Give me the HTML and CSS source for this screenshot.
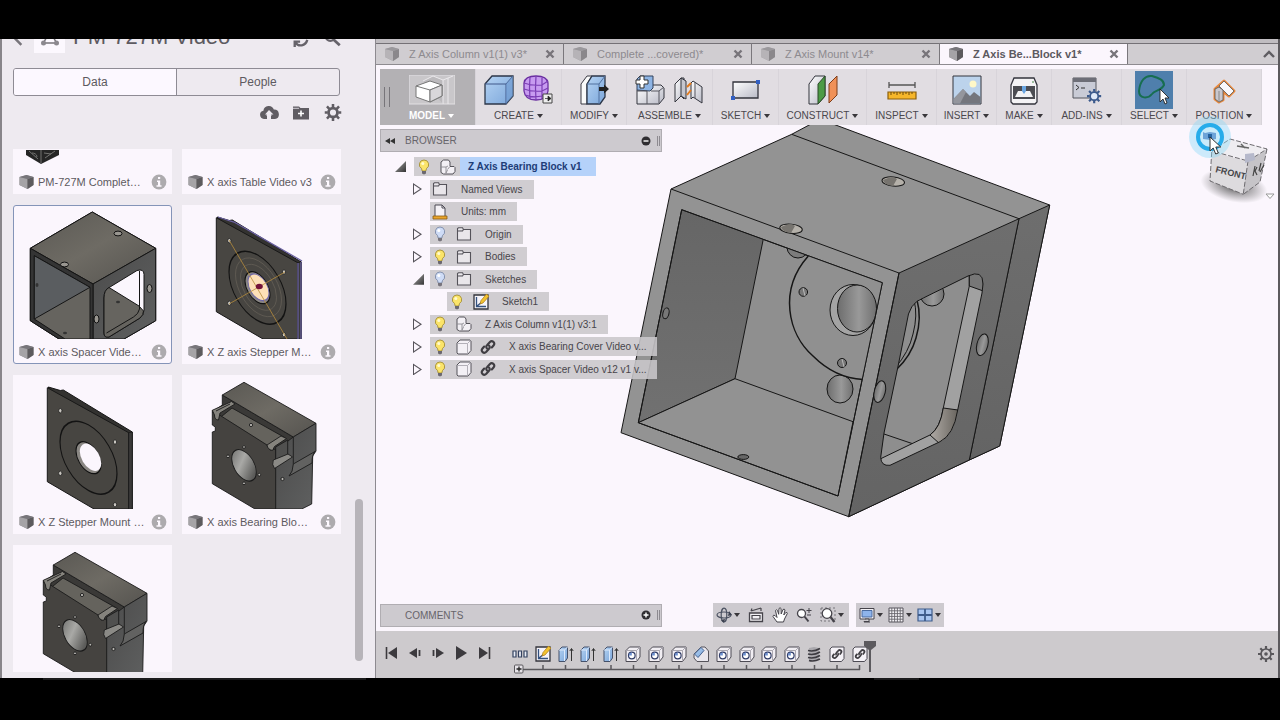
FILE: index.html
```html
<!DOCTYPE html>
<html lang="en">
<head>
<meta charset="utf-8">
<title>Z Axis Bearing Block v1</title>
<link rel="stylesheet" href="styles.css">
</head>
<body>
<svg class="sprite" aria-hidden="true">
  <defs>
    <linearGradient id="gBlue" x1="0" y1="0" x2="1" y2="1"><stop offset="0" stop-color="#b5d3f3"/><stop offset="1" stop-color="#7ba6da"/></linearGradient>
    <linearGradient id="gWhite" x1="0" y1="0" x2="1" y2="1"><stop offset="0" stop-color="#fff"/><stop offset="1" stop-color="#b9bac6"/></linearGradient>
    <linearGradient id="gTop" x1="0" y1="0" x2="1" y2="1"><stop offset="0" stop-color="#5a5853"/><stop offset=".5" stop-color="#6e6b64"/><stop offset="1" stop-color="#55534f"/></linearGradient>
    <linearGradient id="gSide" x1="0" y1="0" x2="1" y2="1"><stop offset="0" stop-color="#4b4b4b"/><stop offset="1" stop-color="#5f6060"/></linearGradient>
    <linearGradient id="gBore" x1="0" y1="0" x2="1" y2=".4"><stop offset="0" stop-color="#6c6c6a"/><stop offset=".5" stop-color="#a9a9a6"/><stop offset="1" stop-color="#5c5c5a"/></linearGradient>
    <linearGradient id="gHole" x1="0" y1="0" x2="1" y2="0"><stop offset="0" stop-color="#6d6d6d"/><stop offset=".55" stop-color="#999"/><stop offset="1" stop-color="#707070"/></linearGradient>
  </defs>
  <symbol id="part" viewBox="0 0 16 16"><path d="M1 3 8 1l7 2v8l-6 4-8-4z" fill="#8b898c"/><path d="M1 3l8 2v10l-8-4z" fill="#a5a3a6"/><path d="M9 5l6-2v8l-6 4z" fill="#5c5a5d"/><path d="M1 3 8 1l7 2-6 2z" fill="#77757a"/></symbol>
  <symbol id="info" viewBox="0 0 16 16"><circle cx="8" cy="8" r="7.400" fill="#adabae"/><path d="M7 3h2.200v2H7zM6 6.500h3.200v4.800h1.300v1.400H5.500v-1.400H7V7.900H6z" fill="#fdf9ff"/></symbol>
  <symbol id="x" viewBox="0 0 10 10"><path d="M1.500 1.500l7 7m0-7l-7 7" stroke="currentColor" stroke-width="2.400"/></symbol>
  <symbol id="bulbOn" viewBox="0 0 16 16"><path d="M8 1a4.600 4.600 0 0 0-2.500 8.500L6.200 12h3.600l.7-2.500A4.600 4.600 0 0 0 8 1z" fill="#fbe46a" stroke="#a38d35" stroke-width=".9"/><circle cx="6.800" cy="4.500" r="1.500" fill="#fffbd0"/><path d="M6 12h4v2.500L8 15.600 6 14.500z" fill="#6b6870"/></symbol>
  <symbol id="bulbOff" viewBox="0 0 16 16"><path d="M8 1a4.600 4.600 0 0 0-2.500 8.500L6.200 12h3.600l.7-2.500A4.600 4.600 0 0 0 8 1z" fill="#cfdcf6" stroke="#7c89a6" stroke-width=".9"/><circle cx="6.800" cy="4.500" r="1.500" fill="#fff"/><path d="M6 12h4v2.500L8 15.600 6 14.500z" fill="#77747c"/></symbol>
  <symbol id="folder" viewBox="0 0 16 16"><path d="M1.500 3.500v-1l1-.8h4l1 1.800h7v10.500h-13zM1.500 5h5l1-1.500" fill="#e9e6ea" stroke="#55535a" stroke-width="1.100"/></symbol>
  <symbol id="comp" viewBox="0 0 16 16"><path d="M1 3l2.500-2h5L10 3v4.500h4l1 1v4L13 15H3.500L1 13.500z" fill="#f3f0f5" stroke="#55535a"/><path d="M1 8h5l2-1M6 8v6.500M7.500 10.500 9.500 8M6 14l1.500-3" fill="none" stroke="#8d8b92" stroke-width=".9"/></symbol>
  <symbol id="body" viewBox="0 0 16 16"><path d="M1 4l3-3h10l1 1v9.500l-3 3.500H2l-1-1z" fill="#f3f0f5" stroke="#55535a"/><path d="M1.500 4.500h10v10M11.500 4.500l3-3" fill="none" stroke="#b3b0b8"/></symbol>
  <symbol id="link" viewBox="0 0 16 16"><g fill="none" stroke="#3f3d42" stroke-width="2.100" stroke-linecap="round"><path d="M7 9.500C5.800 8.200 6.200 7 7.200 6l2.500-2.800c2.500-2.500 6 .6 3.800 3.300L11.800 8.500"/><path d="M9 6.500c1.200 1.300.8 2.500-.2 3.500l-2.500 2.800c-2.500 2.500-6-.6-3.800-3.300L4.200 7.500"/></g></symbol>
  <symbol id="sketch" viewBox="0 0 16 16"><path d="M1 1h14v14H1z" fill="#f6f4fa" stroke="#34343c" stroke-width="1.300"/><path d="M3.500 3v9.500H13M4 12l5-4" stroke="#33517f" fill="none" stroke-width="1.300"/><path d="M7 10l1-3.500L13.500 0 16 2.200 10 9z" fill="#f2c230" stroke="#a97817" stroke-width=".7"/></symbol>
  <symbol id="extrude" viewBox="0 0 16 16"><path d="M1 4l3-3h5.500v11L7 15.500H1z" fill="url(#gBlue)" stroke="#45516a"/><path d="M1 4h5.500v11M6.500 4l3-3" fill="none" stroke="#dce9fb"/><path d="M13.500 15V3M11.800 5l1.700-2.500L15.200 5" stroke="#333" fill="none"/></symbol>
  <symbol id="hole" viewBox="0 0 16 16"><path d="M1 4.500 4.500 1H15v10l-3.500 4.500H1z" fill="#f1eef3" stroke="#4d4b54"/><path d="M1.500 4.500h10v10M11.500 4.500 15 1" fill="none" stroke="#aaa7b0"/><circle cx="6.800" cy="9.500" r="3.300" fill="#fff" stroke="#2f3b66" stroke-width="1.200"/><path d="M6.800 9.500V6.500a3 3 0 0 0-3 3z" fill="#6c8fd0"/></symbol>
  <symbol id="chamfer" viewBox="0 0 16 16"><path d="M1 8l7-7h4l3.500 4v10.500H4L1 12z" fill="#e9e7ed" stroke="#55535a"/><path d="M1.500 8 8 1.500 11 4.500 5 11.500z" fill="url(#gBlue)" stroke="#476391"/></symbol>
  <symbol id="thread" viewBox="0 0 16 16"><path d="M3 2l5-1 5 1v12l-5 1.500L3 14z" fill="#aaa8ad"/><path d="M2 4.500Q8 6 14 2.500M2 8Q8 9.500 14 6M2 11.500Q8 13 14 9.500M3 14.500Q8 16 14 13" stroke="#3c3a40" stroke-width="1.600" fill="none"/></symbol>
  <symbol id="joint" viewBox="0 0 16 16"><path d="M1 3l2-2h12v11.500L12.500 15.500H1z" fill="#f5f2f7" stroke="#4d4b54"/><g transform="translate(2.500 2.500) scale(.7)" fill="none" stroke="#3f3d42" stroke-width="2.500"><path d="M7 9.500C5.800 8.200 6.200 7 7.200 6l2.500-2.800c2.500-2.500 6 .6 3.800 3.300L11.800 8.500M9 6.500c1.200 1.300.8 2.500-.2 3.500l-2.500 2.800c-2.500 2.500-6-.6-3.800-3.300L4.200 7.500"/></g></symbol>
  <symbol id="gear" viewBox="0 0 16 16"><circle cx="8" cy="8" r="4.200" fill="none" stroke="currentColor" stroke-width="2.600"/><path d="M8 0v3M8 13v3M0 8h3M13 8h3M2.300 2.300l2.200 2.200M11.500 11.500l2.200 2.200M2.300 13.700l2.200-2.200M11.500 4.500l2.200-2.200" stroke="currentColor" stroke-width="2.400"/></symbol>
  <g id="plateShape">
    <path d="M48.300 386l12 3.500 3-.5 69 42v77H94z" fill="#333230" stroke="#151515"/>
    <path d="M47.300 386.700l81.400 45V508H94l-46.700-27.300z" fill="#484642" stroke="#181818"/>
    <path d="M128.700 431.700l3.600-.7v77h-3.600z" fill="#3b3a3a" stroke="#181818" stroke-width=".7"/>
    <g transform="matrix(1 .557 0 1.15 88.500 456.700)">
      <circle r="28.500" fill="#474541" stroke="#131313" stroke-width="1.200"/>
      <circle r="12.500" fill="#8a8783" stroke="#111"/>
    </g>
    <g fill="#c9c6c0" stroke="#1c1c1c" stroke-width=".8"><ellipse cx="60.300" cy="409.700" rx="1.700" ry="2.200"/><ellipse cx="115" cy="441" rx="1.700" ry="2.200"/><ellipse cx="60.300" cy="472.300" rx="1.700" ry="2.200"/><ellipse cx="115" cy="503.700" rx="1.700" ry="2.200"/></g>
  </g>
  <g id="blockShape" stroke="#1b1b1b" stroke-width=".9" stroke-linejoin="round">
    <path d="M222.300 394l71 42v27l-17 14-64-66 10-7z" fill="#3a3937"/>
    <path d="M222.300 394L244 381.300l72 41-22.700 13.700z" fill="url(#gTop)"/>
    <path d="M288 440l5.300-4 22.700-13.700V450l-3.300 5-1 48-10 5H275v-58z" fill="url(#gSide)"/>
    <path d="M293.300 436v27" fill="none"/>
    <path d="M289 475q4-4 4.300-12L315 450.500q-3 3-3 11.500z" fill="#626261"/>
    <path d="M220 416.700L232 407l53 29.700-17 9.300z" fill="#65635d"/>
    <path d="M212.300 409.300l7.700 5L267 444l3 5 5.700-1V508H255l-42.700-25.300V431l3-1v-4l-3-2z" fill="#454340"/>
    <path d="M212.300 409.300l19.200-8.800 3.500 2.500-15 9-1.500 7q-4 0-4-5z" fill="#85837d"/><path d="M216 410l14-7" fill="none"/>
    <path d="M267 444l14-9 5.500 2.500-12 8-2 4q-5-1-5.500-5.500z" fill="#85837d"/>
    <path d="M275.700 446l12-7v16l-12 7z" fill="#50504f"/>
    <path d="M273.300 459l14.700-6 4.500 3-18 11.500q-3-4-1.200-8.500z" fill="#8b8a86"/>
    <g transform="matrix(1 .557 0 1.15 244 464.300)"><circle r="12.300" fill="url(#gBore)"/></g>
    <g fill="#bcbab5"><circle cx="244" cy="446" r="1.400"/><circle cx="228" cy="455.300" r="1.400"/><circle cx="259.300" cy="473.700" r="1.400"/><circle cx="244" cy="482.300" r="1.400"/><circle cx="282.500" cy="478" r="1.600"/><circle cx="251" cy="424" r="1.600"/></g>
  </g>
</svg>

<div class="letterbox top"></div>
<div class="app">
  <aside class="data-panel">
    <header class="project">
      <svg class="back" viewBox="0 0 12 24"><path d="M10 4 3 12l7 7" fill="none" stroke="#77747a" stroke-width="3"/></svg>
      <span class="project-icon"><svg viewBox="0 0 20 20"><path d="M10 3 3.500 15h13z" fill="none" stroke="#77747a" stroke-width="1.500"/><circle cx="3.500" cy="15" r="2.500" fill="#8c898f"/><circle cx="16.500" cy="15" r="2.500" fill="#8c898f"/></svg></span>
      <h1>PM-727M Video</h1>
      <svg class="head-icon" viewBox="0 0 20 20"><path d="M3 19v-6h6M4 14c3 5 11 4 13-3M17 2v6h-6" fill="none" stroke="#66636a" stroke-width="2.600"/></svg>
      <svg class="head-icon" viewBox="0 0 20 20"><circle cx="7" cy="7" r="5" fill="none" stroke="#66636a" stroke-width="2.500"/><path d="M10.500 10.500l7 6.500" stroke="#66636a" stroke-width="3"/></svg>
    </header>
    <div class="segmented"><button class="on">Data</button><button>People</button></div>
    <div class="panel-tools">
      <button aria-label="Upload"><svg viewBox="0 0 20 16"><path d="M5 14.500a4.200 4.200 0 0 1-.6-8.300A5.400 5.400 0 0 1 14.800 5a4.800 4.800 0 0 1 1.200 9.500h-4V10h2.500L10 5.500 6 10h2v4.500z" fill="#605d63"/><path d="M8.500 15.500V11H7l3-4 3 4h-1.500v4.500z" fill="#eeeaf1"/></svg></button>
      <button aria-label="New folder"><svg viewBox="0 0 20 16"><path d="M2 2h6l1.500 1.500H18V15H2z" fill="#605d63"/><path d="M2 3.800h6" stroke="#eeeaf1" stroke-width=".8"/><path d="M10 6v6M7 9h6" stroke="#fff" stroke-width="1.600"/></svg></button>
      <button aria-label="Settings"><svg viewBox="0 0 16 16"><use href="#gear"/></svg></button>
    </div>
    <div class="files">
      <ul class="cards">
        <li class="card"><svg class="thumb" viewBox="14 149 157 20" preserveAspectRatio="xMidYMin slice"><path d="M26 149h33v5l-18 9-15-9z" fill="#252525"/><path d="M41 149v13M29 150l9 8M55 150l-10 7M44 152l7 1M32 152c2 0 5 1 5 4" stroke="#7b7b78" fill="none" stroke-width=".9"/></svg><div class="name"><svg class="i16"><use href="#part"/></svg><span>PM-727M Complet…</span><svg class="i16"><use href="#info"/></svg></div></li>
        <li class="card"><svg class="thumb" viewBox="0 0 157 20"></svg><div class="name"><svg class="i16"><use href="#part"/></svg><span>X axis Table Video v3</span><svg class="i16"><use href="#info"/></svg></div></li>
        <li class="card selected"><svg class="thumb" viewBox="14 206 157 133" preserveAspectRatio="xMidYMin slice">
          <g stroke="#151515" stroke-linejoin="round">
            <path d="M30.300 248.300L92.300 212l63.400 36.300v72.400L124 339H59l-28.700-18.300z" fill="#4f4e4c"/>
            <path d="M30.300 248.300L92.300 212l63.400 36.300L93 284z" fill="url(#gTop)"/>
            <path d="M93 284l62.700-35.700v72.400L124 339H93z" fill="url(#gSide)"/>
            <path d="M30.300 248.300L93 284v55H59l-28.700-18.300z" fill="#343434"/>
            <path d="M34.300 255.700L90 287.300V339H65l-30.700-20z" fill="#66645f"/><path d="M34.300 255.700L90 287.300 34.300 319z" fill="#5a5d60"/>
            <path d="M104 298q0-8 6-11l27-16.500q7-2 7 4V310q0 5-4 8l-31 19q-5 1-5-4z" fill="#fbf6fd"/>
            <path d="M104 298q0-8 5-10.500L139 306l4.500 5q0 4-3.500 7l-31 19q-5 1-5-4z" fill="#66645f"/><path d="M139.500 271v38q-1 5-6 8l-27 16" fill="none"/>
          </g>
          <g fill="#999690" stroke="#111"><ellipse cx="118" cy="233.500" rx="4" ry="2.400"/><ellipse cx="64.500" cy="264.500" rx="4" ry="2.400"/><ellipse cx="149.500" cy="288.500" rx="2.500" ry="4"/><ellipse cx="96.500" cy="319" rx="2.500" ry="4"/></g><g fill="#333"><ellipse cx="37" cy="285" rx="1.500" ry="2"/><ellipse cx="118" cy="302" rx="2" ry="1.300"/><ellipse cx="65" cy="333" rx="2" ry="1.300"/></g>
        </svg><div class="name"><svg class="i16"><use href="#part"/></svg><span>X axis Spacer Vide…</span><svg class="i16"><use href="#info"/></svg></div></li>
        <li class="card"><svg class="thumb" viewBox="183 206 157 133" preserveAspectRatio="xMidYMin slice">
          <use href="#plateShape" x="169" y="-169"/>
          <path d="M298 263v77M301 262v78M218 217l12 4 4 1 68 39" stroke="#6a619f" fill="none" stroke-width="1.300"/>
          <g transform="matrix(1 .557 0 1.15 258.500 287.300)"><circle r="10.500" fill="#fde0b8" stroke="#6e67a8"/><g fill="none" stroke="#6d675d" stroke-width=".5"><circle r="18"/><circle r="23"/></g></g>
          <path d="M229 240l58 99M229 304l56-32" stroke="#b58b3c" stroke-width=".8"/><ellipse cx="259.300" cy="286.500" rx="3.500" ry="2.800" fill="#741339"/>
        </svg><div class="name"><svg class="i16"><use href="#part"/></svg><span>X Z axis Stepper M…</span><svg class="i16"><use href="#info"/></svg></div></li>
        <li class="card"><svg class="thumb" viewBox="14 375 157 133" preserveAspectRatio="xMidYMin slice"><use href="#plateShape"/><g transform="matrix(1 .557 0 1.15 90.500 456.300)"><circle r="10.700" fill="#fbf6fd"/></g></svg><div class="name"><svg class="i16"><use href="#part"/></svg><span>X Z Stepper Mount …</span><svg class="i16"><use href="#info"/></svg></div></li>
        <li class="card"><svg class="thumb" viewBox="183 375 157 133" preserveAspectRatio="xMidYMin slice"><use href="#blockShape"/></svg><div class="name"><svg class="i16"><use href="#part"/></svg><span>X axis Bearing Blo…</span><svg class="i16"><use href="#info"/></svg></div></li>
        <li class="card"><svg class="thumb" viewBox="183 375 157 133" preserveAspectRatio="xMidYMin slice"><use href="#blockShape"/></svg><div class="name"></div></li>
      </ul>
      <div class="scrollbar"></div>
    </div>
  </aside>

  <main class="workspace">
    <nav class="tabs">
      <div class="tab"><svg class="i16"><use href="#part"/></svg><button class="tab-name">Z Axis Column v1(1) v3*</button><button class="close" aria-label="Close"><svg><use href="#x"/></svg></button></div>
      <div class="tab"><svg class="i16"><use href="#part"/></svg><button class="tab-name">Complete ...covered)*</button><button class="close" aria-label="Close"><svg><use href="#x"/></svg></button></div>
      <div class="tab"><svg class="i16"><use href="#part"/></svg><button class="tab-name">Z Axis Mount v14*</button><button class="close" aria-label="Close"><svg><use href="#x"/></svg></button></div>
      <div class="tab active"><svg class="i16"><use href="#part"/></svg><button class="tab-name">Z Axis Be...Block v1*</button><button class="close" aria-label="Close"><svg><use href="#x"/></svg></button></div>
      <button class="collapse" aria-label="Collapse"><svg viewBox="0 0 12 8"><path d="M1 7l5-5 5 5" fill="none" stroke="#5f5d62" stroke-width="2.400"/></svg></button>
    </nav>

    <div class="toolbar">
      <button class="tool model"><span class="art"><svg width="46" height="30" viewBox="0 0 46 30"><path d="M0 0h46v29H0z" fill="#c9c7ca" stroke="#e2e0e3"/><path d="M14 6 24 1l10 4V29M34 5l10-4M39 3v26" fill="#bcbabd" stroke="#ebe9ec"/><path d="M7 11l14-5 12 4v11l-12 6-14-5z" fill="#fff" stroke="#777"/><path d="M7 11l14 4 12-5M21 15v12" fill="none" stroke="#777"/><path d="M21 15l12-5v11l-12 6z" fill="#d9d7da" stroke="#777"/></svg></span><span class="label">MODEL<i></i></span></button>
      <button class="tool"><span class="art wide"><svg width="30" height="30"><path d="M1 9l7-8h21v20l-7 8H1z" fill="url(#gBlue)" stroke="#2c3648" stroke-width="1.300"/><path d="M1 9h21v20M22 9l7-8" fill="none" stroke="#40598a"/><path d="M22 9l7-8v20l-7 8z" fill="#6c98ce" opacity=".6"/></svg><svg width="30" height="30"><path d="M1 8q1-7 12-7t12 7v8q-1 9-12 9T1 16z" fill="#c79bf0" stroke="#6a2fa0" stroke-width="1.300"/><path d="M1 8q8 3 18 2l6-4M1 14q8 3 18 2l6-3M2 20q8 3 17 1l5-2M7 2q-1 10 0 22M13 1q-1 12 0 24M19 3v21" fill="none" stroke="#7a3db4" stroke-width="1.200"/><path d="M20 19h9v9h-9z" fill="#eee" stroke="#444"/><path d="M22 23.500h3v-2.500l3 2.500-3 2.500v-2.500" fill="#222" stroke="#222" stroke-width=".7"/></svg></span><span class="label">CREATE<i></i></span></button>
      <button class="tool"><span class="art"><svg width="30" height="30"><path d="M2 9l6-8h5L8 9v20H2z" fill="#fafafa" stroke="#3a3a44"/><path d="M8 9l5-8h13v21l-5 7H8z" fill="url(#gBlue)" stroke="#2c3648" stroke-width="1.300"/><path d="M8 9h12v20M20 9l6-8" fill="none" stroke="#50709f"/><path d="M20 12h5V9.500l5 4.500-5 4.500V16h-5z" fill="#222"/></svg></span><span class="label">MODIFY<i></i></span></button>
      <button class="tool"><span class="art wide"><svg width="30" height="30"><path d="M2 15h10l5-5h9l3 3v10l-5 6H2z" fill="url(#gWhite)" stroke="#33343d"/><path d="M2 15V4l3-3h13v12l-3 3z" fill="#8db4e4" stroke="#33435c"/><path d="M12 16v13M2 16h10M16 16h8l5-4M24 16v12" fill="none" stroke="#56565f"/><path d="M5 1h4v4h4v4H9v4H5V9H1V5h4z" fill="#fff" stroke="#333"/></svg><svg width="30" height="30"><path d="M1 9l6-6h3v21l-3-3-6 6z" fill="url(#gWhite)" stroke="#33343d"/><path d="M7 3l5 3v18l-5-3z" fill="#c5c6ce" stroke="#33343d"/><path d="M17 8l2-2 9 6v16l-9-6-2 2z" fill="url(#gWhite)" stroke="#33343d"/><path d="M21 7v16" stroke="#55555c"/><path d="M13 12l4-4M13 20l4-5" stroke="#e27b1e" stroke-width="2"/></svg></span><span class="label">ASSEMBLE<i></i></span></button>
      <button class="tool"><span class="art"><svg width="30" height="30"><path d="M2 7h25v16H2z" fill="url(#gWhite)" stroke="#33343d" stroke-width="1.300"/><path d="M25 5h4v4h-4zM0 21h4v4H0z" fill="#3260c4"/></svg></span><span class="label">SKETCH<i></i></span></button>
      <button class="tool"><span class="art"><svg width="30" height="30"><path d="M1 9l6-8h10v20l-7 8H1z" fill="url(#gWhite)" stroke="#33343d"/><path d="M10 9l7-8v20l-7 8z" fill="#4c9b45" stroke="#2b4a28"/><path d="M21 9l8-8v19l-8 8z" fill="#f09158" stroke="#7e3d19"/></svg></span><span class="label">CONSTRUCT<i></i></span></button>
      <button class="tool"><span class="art"><svg width="30" height="30"><path d="M2 10h26M2 7v6M28 7v6" stroke="#555" stroke-width="1.300"/><path d="M1 17h28v7H1z" fill="#f6b62a" stroke="#8c5f0b" stroke-width="1.200"/><path d="M4 17v3M7 17v2M10 17v3M13 17v2M16 17v3M19 17v2M22 17v3M25 17v2" stroke="#6c4a0a"/></svg></span><span class="label">INSPECT<i></i></span></button>
      <button class="tool"><span class="art"><svg width="30" height="30"><path d="M1 1h28v28H1z" fill="#bcd3ec" stroke="#33343d"/><path d="M1.500 24L11 14l7 7 4-4 6.500 5v6.500h-27z" fill="#74767d"/><path d="M1.500 24L11 14l3 3-6 11.500H1.500z" fill="#94969d"/><circle cx="21" cy="9" r="3.500" fill="#fff8c8"/></svg></span><span class="label">INSERT<i></i></span></button>
      <button class="tool"><span class="art"><svg width="30" height="30"><path d="M2 10l3-7h20l3 7v17l-2 2H4l-2-2z" fill="#f4f3f5" stroke="#33343d" stroke-width="1.300"/><path d="M4 11h22v13H4z" fill="#4b4c52"/><path d="M6 22l3-6h12l3 6z" fill="#f2f2f4"/><path d="M13 11h4v5l-2 3-2-3z" fill="#69a5e0"/><path d="M23 7h2" stroke="#484"/></svg></span><span class="label">MAKE<i></i></span></button>
      <button class="tool"><span class="art"><svg width="30" height="30"><path d="M1 3h23v20H1z" fill="#c9cbd6" stroke="#55565e"/><path d="M1 3h23v4H1z" fill="#6d6e77"/><path d="M4 10l3 2.500L4 15M9 13h4" fill="none" stroke="#333"/><g transform="translate(15 14) scale(.9)" color="#3c5a8c"><use href="#gear" width="16" height="16"/><circle cx="8" cy="8" r="3.500" fill="#dfe9f8"/></g></svg></span><span class="label">ADD-INS<i></i></span></button>
      <button class="tool"><span class="art"><svg width="38" height="38"><path d="M0 0h38v38H0z" fill="#4f7fac"/><path d="M4 20C5 10 10 4 17 5c7 2 12 4 12 9-3 6-9 5-12 9-4 5-13 5-13-3z" fill="none" stroke="#176e50" stroke-width="2"/><path d="M25 18v13l3-3 2 5 2-1-2-5h4z" fill="#fff" stroke="#222" stroke-width=".9"/></svg></span><span class="label">SELECT<i></i></span></button>
      <button class="tool"><span class="art"><svg width="30" height="30"><g stroke="#e9883b" stroke-width="3" stroke-linejoin="round" fill="#e9883b"><path d="M6 14l9-8 10 10-5 5-6-5v9l-4 2-4-3z"/></g><path d="M6 14l4-2 4 3v10l-4 2-4-3z" fill="#c9c8ce" stroke="#555" stroke-width=".8"/><path d="M10 16v11" stroke="#888"/><path d="M10 11l5-5 10 10-5 5-6-6z" fill="#f8f7fa" stroke="#555" stroke-width=".8"/></svg></span><span class="label">POSITION<i></i></span></button>
    </div>

    <section class="viewport">
      <svg class="scene" viewBox="376 125 902 505" preserveAspectRatio="xMinYMin meet">
        <defs>
          <clipPath id="open"><path d="M681.700 209.700l200.600 73L838 496l-199.700-73.300z"/></clipPath>
          <clipPath id="win"><path d="M968 276q15-7 15 8l-1 9-24.300 117q-4 25-17.700 31.700l-50 23.600q-9 1-9.300-8L884 433l14.300-68 8.400-42q2-20 16.600-25z"/></clipPath>
          <linearGradient id="wall" x1="0" y1="0" x2="0" y2="1"><stop offset="0" stop-color="#666"/><stop offset="1" stop-color="#717171"/></linearGradient>
          <linearGradient id="side" x1="0" y1="0" x2="0" y2="1"><stop offset="0" stop-color="#6e6e6e"/><stop offset="1" stop-color="#646464"/></linearGradient>
          <linearGradient id="fil" x1="0" y1="0" x2="1" y2="0"><stop offset="0" stop-color="#b0aba6"/><stop offset="1" stop-color="#69655f"/></linearGradient>
        </defs>
        <g stroke="#161616" stroke-linejoin="round">
          <path d="M811 124h22l216.700 81-50 241-30.400 14-120.600 56.700L621 432.700 671 189l120.700-54.700z" fill="#939393"/>
          <path d="M1019 218.700L1049.700 205l-50 241-30.400 14z" fill="url(#side)"/>
          <path d="M899 273l120-54.300L969.300 460l-120.600 56.700z" fill="url(#side)"/>
          <path d="M791.700 134.300l227.300 84.400M671 189l228 84-50.300 243.700" fill="none"/>
          <path d="M681.700 209.700l200.600 73L838 496l-199.700-73.300z" fill="#8f8f8f"/>
          <g clip-path="url(#open)">
            <path d="M681.700 209.700l81.600 29.300L735 378.700l-96.700 44z" fill="url(#wall)"/>
            <path d="M638.300 422.700l96.700-44 118 43L838 496z" fill="#929292"/>
            <ellipse cx="798" cy="247" rx="11" ry="11" fill="#7c7c7c"/>
            <ellipse cx="840" cy="389" rx="13" ry="14" fill="url(#gHole)"/>
            <path d="M808.300 256C778 290 788 334 813 356q22 22 50 23.500h40V240h-88z" fill="#909090" stroke="none"/>
            <path d="M808.300 256C778 290 788 334 813 356q22 22 50 23.500" fill="none" stroke-width="1.500"/>
            <ellipse cx="853" cy="310" rx="23" ry="25.500" fill="#a4a4a4"/><ellipse cx="857" cy="308.500" rx="19.500" ry="23.500" fill="url(#gHole)"/>
            <circle cx="803.300" cy="292" r="4.300" fill="#777"/><path d="M803 288l2 8" stroke="#bbb"/><circle cx="842" cy="363" r="4.500" fill="#777"/><path d="M842 359l2 8" stroke="#bbb"/>
          </g>
          <path d="M681.700 209.700l200.600 73L838 496l-199.700-73.300z" fill="none"/>
          <g clip-path="url(#win)">
            <path d="M870 260h120v215H870z" fill="#8e8e8e"/>
            <circle cx="932" cy="294" r="12" fill="url(#gHole)"/>
            <path d="M914 300q4 15-1 34-4 18-18 34" fill="none" stroke-width="1"/><path d="M917 300q5 18-1 38-5 18-20 32" fill="none" stroke-width="1.500"/>
            <path d="M884 434l28 9.500" fill="none"/>
            <path d="M969.300 270v16l-26 122q-3 20-13.300 27l-52 25v15h70l45-65V270z" fill="#a1a1a1"/>
            <path d="M943.300 408q-3 20-13.300 27l10 9q18-8 18-34z" fill="url(#fil)"/><path d="M969.300 270v16l14 5v-30z" fill="#777"/>
          </g>
          <path d="M968 276q15-7 15 8l-1 9-24.300 117q-4 25-17.700 31.700l-50 23.600q-9 1-9.300-8L884 433l14.300-68 8.400-42q2-20 16.600-25z" fill="none"/>
          <g fill="#b5b1aa"><ellipse cx="893.300" cy="181.500" rx="11.300" ry="4.600" transform="rotate(6 893 181)"/><ellipse cx="791" cy="228.700" rx="11.300" ry="4.600" transform="rotate(6 791 229)"/></g>
          <g fill="#77746f" stroke="none"><path d="M883 180q10-5 14-1l-4 7q-9-1-10-6zM781 227q10-5 14-1l-4 7q-9-1-10-6z"/></g>
          <g fill="url(#gHole)"><ellipse cx="982.300" cy="344.700" rx="5.500" ry="11" transform="rotate(14 982 345)"/><ellipse cx="879.700" cy="391.700" rx="5.500" ry="11" transform="rotate(14 880 392)"/></g>
          <ellipse cx="666" cy="313.300" rx="3" ry="5.500" fill="#777" transform="rotate(14 666 313)"/><ellipse cx="743.300" cy="457" rx="5.500" ry="2.400" fill="#666"/>
        </g>
      </svg>

      <svg class="viewcube" width="110" height="110" viewBox="1170 110 110 110">
        <defs><radialGradient id="shadow"><stop offset="0" stop-color="#555"/><stop offset="1" stop-color="#666" stop-opacity="0"/></radialGradient></defs>
        <ellipse cx="1234" cy="186" rx="34" ry="16" fill="url(#shadow)" transform="rotate(12 1234 186)"/>
        <path d="M1211.700 151.700l36.300 9.600-4.700 33-33.300-13.300z" fill="#dddbde"/><path d="M1248 161.300l19-12-7 32.700-16.700 12.300z" fill="#c6c4c8"/><path d="M1212 151l18-12 37 10-19 12z" fill="#efedf1"/>
        <path d="M1212 151l18-12 37 10-19 12zM1248 161l-4.700 33M1267 149l-7 33-16.700 12.300M1211.700 152l-1.700 29 33.300 13.300" fill="none" stroke="#6e6c70" stroke-dasharray="5 2"/>
        <path d="M1245 154l9-1 1 7-10 3z" fill="#b6b9cb"/><path d="M1237 146l12 2M1241 144l4 4" stroke="#666" stroke-width="1.500"/>
        <text x="1215" y="172" transform="rotate(14 1215 172)" class="cube-text">FRONT</text>
        <path d="M1253 176l2-10M1257 167l-2 4 2 4M1261 163l-2 8M1260 172l4-7" stroke="#444" stroke-width="1.200" fill="none"/>
        <circle cx="1210" cy="137" r="21" fill="#8ad9f8" opacity=".4"/><circle cx="1210" cy="137" r="12" fill="#c9ebfb" stroke="#27acea" stroke-width="4"/>
        <path d="M1203 132l2 1 5-1 6 1v6l-5 1-8-1z" fill="#6da3d8"/><path d="M1208 134h4v4h-4z" fill="#23619f"/>
        <path d="M1210 137v14l3.200-3 2.500 6 2.600-1-2.500-6h5z" fill="#fff" stroke="#333"/>
        <path d="M1266 194h8l-4 4.500z" fill="#fff" stroke="#999"/>
      </svg>

      <div class="overlay">
        <header class="bar"><svg class="rew" viewBox="0 0 10 6"><path d="M5 0v6L0 3zM10 0v6L5 3z" fill="#333"/></svg><span>BROWSER</span><button aria-label="Hide"><svg viewBox="0 0 10 10"><circle cx="5" cy="5" r="4.500" fill="#2f2d31"/><path d="M2.500 5h5" stroke="#fff" stroke-width="1.400"/></svg></button><b class="grip"></b></header>
        <ul class="tree">
          <li class="root"><button class="tw open" aria-label="Toggle"></button><div class="node"><svg class="i16"><use href="#bulbOn"/></svg><svg class="i16"><use href="#comp"/></svg><span>Z Axis Bearing Block v1</span></div></li>
          <li><button class="tw" aria-label="Toggle"></button><div class="node"><svg class="i16"><use href="#folder"/></svg><span>Named Views</span></div></li>
          <li><b class="tw-space"></b><div class="node"><svg class="i16" viewBox="0 0 16 16"><path d="M3 12V1h7l3 3v8" fill="#f4f1f6" stroke="#4d4b54"/><path d="M10 1v3h3" fill="none" stroke="#4d4b54"/><path d="M1 12h14v3H1z" fill="#eaa52a" stroke="#8b5b10" stroke-width=".8"/></svg><span>Units: mm</span></div></li>
          <li><button class="tw" aria-label="Toggle"></button><div class="node"><svg class="i16"><use href="#bulbOff"/></svg><svg class="i16"><use href="#folder"/></svg><span>Origin</span></div></li>
          <li><button class="tw" aria-label="Toggle"></button><div class="node"><svg class="i16"><use href="#bulbOn"/></svg><svg class="i16"><use href="#folder"/></svg><span>Bodies</span></div></li>
          <li><button class="tw open" aria-label="Toggle"></button><div class="node"><svg class="i16"><use href="#bulbOff"/></svg><svg class="i16"><use href="#folder"/></svg><span>Sketches</span></div></li>
          <li class="deep"><b class="tw-space"></b><div class="node"><svg class="i16"><use href="#bulbOn"/></svg><svg class="i16"><use href="#sketch"/></svg><span>Sketch1</span></div></li>
          <li><button class="tw" aria-label="Toggle"></button><div class="node"><svg class="i16"><use href="#bulbOn"/></svg><svg class="i16"><use href="#comp"/></svg><span>Z Axis Column v1(1) v3:1</span></div></li>
          <li><button class="tw" aria-label="Toggle"></button><div class="node"><svg class="i16"><use href="#bulbOn"/></svg><svg class="i16"><use href="#body"/></svg><svg class="i16"><use href="#link"/></svg><span>X axis Bearing Cover Video v...</span></div></li>
          <li><button class="tw" aria-label="Toggle"></button><div class="node"><svg class="i16"><use href="#bulbOn"/></svg><svg class="i16"><use href="#body"/></svg><svg class="i16"><use href="#link"/></svg><span>X axis Spacer Video v12 v1 v...</span></div></li>
        </ul>
        <footer class="bottom">
          <div class="bar"><b class="rew"></b><span>COMMENTS</span><button aria-label="Show"><svg viewBox="0 0 10 10"><circle cx="5" cy="5" r="4.500" fill="#2f2d31"/><path d="M2.500 5h5M5 2.500v5" stroke="#fff" stroke-width="1.400"/></svg></button><b class="grip"></b></div>
          <div class="navbar">
            <button class="drop" aria-label="Orbit"><svg class="i16" viewBox="0 0 16 16"><ellipse cx="8" cy="8" rx="7" ry="3" fill="none" stroke="#4c5262" stroke-width="1.200"/><ellipse cx="8" cy="8" rx="2.800" ry="6.800" fill="none" stroke="#4c5262" stroke-width="1.200"/><path d="M5 13l3 3 1-4zM13 4l3 4-4 1z" fill="#3c4150"/></svg><i></i></button>
            <button aria-label="Look at"><svg class="i16" viewBox="0 0 16 16"><path d="M1.500 6h13v8.500h-13z" fill="#f3f1f5" stroke="#45434a" stroke-width="1.300"/><path d="M4 8.500h8v3.500H4zM3 4l10-3M3 4l1-2.500M13 1v3" fill="none" stroke="#45434a" stroke-width="1.200"/></svg></button>
            <button aria-label="Pan"><svg class="i16" viewBox="0 0 16 16"><path d="M5 15L1 9.500q0-2 2-1l2 2L3.500 3.500q1-1.500 2 0l1.200 3.800L7 1.500q1.200-1.500 2 0l.2 5.500L11 2.500q1.500-1 2 .5L11.800 8l2-2.500q1.500-.5 1.500 1L12.500 12l-1 3z" fill="#fff" stroke="#45434a"/></svg></button>
            <button aria-label="Zoom"><svg class="i16" viewBox="0 0 16 16"><circle cx="5.500" cy="6.500" r="4" fill="#fff" stroke="#45434a" stroke-width="1.300"/><path d="M8.500 9.500l4 5" stroke="#45434a" stroke-width="2"/><path d="M13 1v5M10.500 3.500h5M11 8h4" stroke="#45434a"/></svg></button>
            <button class="drop" aria-label="Fit"><svg class="i16" viewBox="0 0 16 16"><path d="M1 1h14v13H1z" fill="none" stroke="#77757b" stroke-dasharray="2 2"/><circle cx="7" cy="6.500" r="4.800" fill="#fff" stroke="#45434a" stroke-width="1.300"/><path d="M10.500 10l4 5" stroke="#45434a" stroke-width="2.200"/></svg><i></i></button>
          </div>
          <div class="navbar second">
            <button class="drop" aria-label="Display"><svg class="i16" viewBox="0 0 16 16"><path d="M1 1.500h14v10.500H1z" fill="#f3f1f5" stroke="#45434a"/><path d="M3 3.500h10V10H3z" fill="#8eb4ec" stroke="#4a6ba0"/><path d="M6 12h4v2.500H5V15h6" fill="#ddd" stroke="#45434a"/></svg><i></i></button>
            <button class="drop" aria-label="Grid"><svg class="i16" viewBox="0 0 16 16"><path d="M1 1h14v14H1z" fill="#f6f4f8" stroke="#55535a"/><path d="M3.800 1v14M6.600 1v14M9.400 1v14M12.200 1v14M1 3.800h14M1 6.600h14M1 9.400h14M1 12.200h14" stroke="#66646b" stroke-width=".9"/></svg><i></i></button>
            <button class="drop" aria-label="Viewports"><svg class="i16" viewBox="0 0 16 16"><path d="M1 2h14v12H1z" fill="#a9c5f0" stroke="#3f5c8b" stroke-width="1.200"/><path d="M8 2v12M1 8h14" stroke="#3f5c8b" stroke-width="1.800"/></svg><i></i></button>
          </div>
        </footer>
      </div>
    </section>

    <section class="timeline">
      <div class="playback">
        <button aria-label="Start"><svg viewBox="0 0 14 14"><path d="M1.500 1v12" stroke="#3c3a3e" stroke-width="1.600"/><path d="M12 1v12L3 7z" fill="#3c3a3e"/></svg></button>
        <button aria-label="Back"><svg viewBox="0 0 14 14"><path d="M9 2v10L1 7z" fill="#3c3a3e"/><path d="M11.500 4v6" stroke="#3c3a3e" stroke-width="1.800"/></svg></button>
        <button aria-label="Forward"><svg viewBox="0 0 14 14"><path d="M5 2v10l8-5z" fill="#3c3a3e"/><path d="M2.500 4v6" stroke="#3c3a3e" stroke-width="1.800"/></svg></button>
        <button aria-label="Play"><svg viewBox="0 0 14 14"><path d="M2 0v14l11-7z" fill="#3c3a3e"/></svg></button>
        <button aria-label="End"><svg viewBox="0 0 14 14"><path d="M12.500 1v12" stroke="#3c3a3e" stroke-width="1.600"/><path d="M2 1v12l9-6z" fill="#3c3a3e"/></svg></button>
      </div>
      <div class="track">
        <div class="steps">
          <svg class="i16" viewBox="0 0 16 16"><path d="M1 5h3v6H1zM6.500 5h3v6h-3zM12 5h3v6h-3z" fill="#e9edf7" stroke="#33415f" stroke-width="1.200"/></svg>
          <svg class="i16"><use href="#sketch"/></svg><svg class="i16"><use href="#extrude"/></svg><svg class="i16"><use href="#extrude"/></svg><svg class="i16"><use href="#extrude"/></svg>
          <svg class="i16"><use href="#hole"/></svg><svg class="i16"><use href="#hole"/></svg><svg class="i16"><use href="#hole"/></svg><svg class="i16"><use href="#chamfer"/></svg>
          <svg class="i16"><use href="#hole"/></svg><svg class="i16"><use href="#hole"/></svg><svg class="i16"><use href="#hole"/></svg><svg class="i16"><use href="#hole"/></svg>
          <svg class="i16"><use href="#thread"/></svg><svg class="i16"><use href="#joint"/></svg><svg class="i16"><use href="#joint"/></svg>
        </div>
        <svg class="rail" width="362" height="10" viewBox="0 0 362 10"><path d="M14 5.500H351M34 5V1M56.500 5V1M79 5V1M102 5V1M124.500 5V1M147 5V1M170 5V1M192.500 5V1M215 5V1M237.500 5V1M260 5V1M283 5V1M305.500 5V1M328 5V1M350.500 6V1" stroke="#5a585c" stroke-width="1.500" fill="none"/><rect x="5.500" y="1" width="8.500" height="8" rx="1" fill="#e6e3e8" stroke="#5a585c"/><path d="M7.500 5h5M10 2.500v5" stroke="#222" stroke-width="1.300"/></svg>
        <svg class="marker" width="12" height="31" viewBox="0 0 12 31"><path d="M0 0h12v5L7 9v22H5V9L0 5z" fill="#5c5a5e"/></svg>
      </div>
      <button class="settings" aria-label="Settings"><svg viewBox="0 0 16 16"><path d="M8 0v3M8 13v3M0 8h3M13 8h3M2.300 2.300l2.200 2.200M11.500 11.500l2.200 2.200M2.300 13.700l2.200-2.200M11.500 4.500l2.200-2.200" stroke="#59575b" stroke-width="2.200"/><circle cx="8" cy="8" r="5" fill="none" stroke="#59575b" stroke-width="1.700"/><circle cx="8" cy="8" r="1.800" fill="#59575b"/></svg></button>
    </section>
  </main>
</div>
<div class="letterbox bottom-box"><i class="wide-line"></i><i class="short-line"></i></div>
</body>
</html>
```

FILE: styles.css
```css
* { box-sizing: border-box; }
body {
  margin: 0; min-height: 100vh; display: flex; flex-direction: column;
  background: #000; color: #5d5a60;
  font-family: "Liberation Sans", Arial, sans-serif; font-size: 11px;
}
button { font: inherit; color: inherit; background: none; border: 0; padding: 0; margin: 0; cursor: pointer; }
ul { list-style: none; margin: 0; padding: 0; }
svg { display: block; flex: none; }
.sprite { position: absolute; width: 0; height: 0; }
.i16 { width: 16px; height: 16px; }
.letterbox { flex: none; }
.top { height: 39px; }
.bottom-box { height: 42px; display: flex; gap: 508px; padding-left: 43px; }
.bottom-box i { height: 2px; background: #1b1b1c; }
.wide-line { width: 323px; }
.short-line { width: 45px; }
.app { flex: 1; display: flex; min-height: 0; }

/* data panel */
.data-panel {
  width: 376px; flex: none; display: flex; flex-direction: column;
  background: #eeeaf0; border-left: 2px solid #88858a; border-right: 1px solid #8d8a90;
  padding: 0 0 6px 11px;
}
.project { height: 14px; display: flex; align-items: flex-end; overflow: hidden; padding-right: 33px; }
.project h1 { margin: 0 auto 0 8px; font-size: 22px; line-height: 32px; font-weight: 400; color: #5d5a61; white-space: nowrap; }
.back { width: 10px; height: 28px; }
.project-icon { margin-left: 11px; width: 31px; height: 30px; background: #fcf8fe; display: flex; align-items: center; justify-content: center; }
.project-icon svg { width: 20px; height: 20px; }
.head-icon { width: 18px; height: 28px; margin-left: 14px; }
.segmented { display: flex; margin: 15px 35px 0 0; border: 1px solid #8e8b94; border-radius: 3px; overflow: hidden; }
.segmented button { flex: 1; height: 26px; font-size: 12px; }
.segmented .on { background: #fcf8ff; border-right: 1px solid #8e8b94; }
.panel-tools { display: flex; justify-content: flex-end; gap: 12px; margin: 8px 32px 0 0; color: #605d63; }
.panel-tools svg { width: 20px; height: 17px; }
.files { flex: 1; min-height: 0; margin-top: 28px; display: flex; overflow: hidden; }
.cards { width: 328px; display: grid; grid-template-columns: 1fr 1fr; grid-template-rows: 45px; grid-auto-rows: 159px; gap: 11px 10px; height: 0; }
.card { background: #fbf6fd; border: 1px solid #fbf6fd; display: flex; flex-direction: column; overflow: hidden; }
.card.selected { border-color: #8494b8; border-radius: 3px; }
.thumb { width: 100%; flex: 1; min-height: 0; }
.name { height: 24px; flex: none; display: flex; align-items: center; gap: 3px; padding: 1px 4px 0; }
.name span { flex: 1; white-space: nowrap; overflow: hidden; }
.name .i16:first-child { width: 17px; }
.scrollbar { width: 8px; height: 162px; margin: auto 0 11px 14px; border-radius: 4px; background: #b7b4b9; }

/* document tabs */
.workspace { flex: 1; min-width: 0; display: flex; flex-direction: column; background: #fbf6fd; border-right: 2px solid #5c5a5e; }
.tabs { display: flex; height: 26px; background: #d0cdd1; border-top: 4px solid #c0bdc1; border-bottom: 1px solid #8e8b90; box-shadow: inset 0 1px #747176; }
.tab { flex: 0 1 188px; display: flex; align-items: center; padding: 0 8px; border-right: 1px solid #7a777c; color: #8d8a8f; }
.tab .i16 { opacity: .6; }
.tab.active .i16 { opacity: 1; }
.tab-name { flex: 1; white-space: nowrap; text-align: left; margin-left: 9px; }
.close svg { width: 10px; height: 10px; color: #77747a; }
.tab.active { background: #fbf6fd; color: #5c595f; font-weight: 700; margin-top: 1px; }
.collapse { margin-left: auto; padding-right: 3px; }
.collapse svg { width: 12px; height: 8px; }

/* toolbar */
.toolbar {
  display: grid; grid-template-columns: 96fr 86fr 65fr 86fr 66fr 88fr 70fr 60fr 55fr 70fr 65fr 75fr;
  margin: 4px 16px 0 4px; height: 56px; background: #e1dde2;
}
.tool { display: flex; flex-direction: column; align-items: center; justify-content: flex-end; padding-bottom: 3px; border-right: 1px solid #d8d4da; }
.art { height: 38px; display: flex; align-items: center; gap: 9px; }
.label { font-size: 10px; line-height: 13px; white-space: nowrap; color: #4a474d; display: flex; align-items: center; gap: 3px; }
.label i, .drop i { border: solid transparent; border-width: 4px 3px 0; border-top-color: #39373b; }
.model { background: #b3b1b4; position: relative; padding-left: 8px; }
.model::before { content: ""; position: absolute; left: 4px; top: 18px; width: 4px; height: 20px; border: solid #77757a; border-width: 0 1px; }
.model .label { color: #fff; font-weight: 700; }
.model .label i { border-top-color: #fff; }

/* viewport */
.viewport { flex: 1; position: relative; min-height: 0; }
.scene { position: absolute; inset: 0; width: 100%; height: 100%; }
.viewcube { position: absolute; right: -2px; top: -15px; z-index: 2; }
.cube-text { font-family: "Liberation Sans", Arial, sans-serif; font-size: 9px; font-weight: 700; fill: #454549; }
.overlay { position: relative; height: 100%; display: flex; flex-direction: column; padding: 4px 4px 3px; }
.bar { width: 282px; height: 23px; display: flex; align-items: center; background: #cdcacf; border: 1px solid #b0adb2; font-size: 10px; color: #67646a; }
.rew { width: 10px; height: 6px; margin: 0 10px 0 4px; }
.bar span { flex: 1; }
.bar svg { width: 10px; height: 10px; }
.bar .rew { height: 6px; }
.grip { width: 3px; height: 10px; margin: 0 1px 0 6px; border: solid #8d8a90; border-width: 0 1px; }
.tree { min-height: 222px; margin-top: 5px; display: flex; flex-direction: column; justify-content: space-between; font-size: 10px; color: #48454b; }
.tree li { display: flex; height: 19px; align-items: center; padding-left: 32px; }
.tree .root { padding-left: 14px; }
.tree .deep { padding-left: 49px; }
.tw, .tw-space { width: 12px; height: 14px; margin-right: 6px; flex: none; }
.root .tw { margin-right: 8px; }
.tw::before { content: ""; display: block; width: 9px; height: 12px; background: #57545b; clip-path: polygon(0 0, 100% 50%, 0 100%, 0 0, 1px 2px, 1px 10px, 7px 6px, 1px 2px); margin: 1px; }
.tw.open::before { width: 11px; height: 11px; background: linear-gradient(135deg, #aaa, #333); clip-path: polygon(100% 0, 100% 100%, 0 100%); }
.node { display: flex; align-items: center; gap: 8px; height: 19px; padding: 0 11px 0 2px; background: rgba(202, 199, 203, .88); white-space: nowrap; }
.node span { padding-left: 5px; }
.root .node { padding-right: 0; }
.root .node span { background: #b5d2fa; color: #1d3c77; font-weight: 700; line-height: 19px; padding: 0 14px 0 8px; margin-left: -4px; }
.bottom { margin-top: auto; display: flex; align-items: center; }
.navbar { height: 24px; margin-left: 51px; display: flex; align-items: center; gap: 8px; padding: 0 5px 0 3px; background: #cdcacf; }
.navbar.second { margin-left: 7px; gap: 5px; padding-right: 3px; }
.drop { display: flex; align-items: center; gap: 2px; }

/* timeline */
.timeline { height: 47px; flex: none; display: flex; background: #cdcacd; margin-top: 1px; }
.playback { display: flex; gap: 9px; height: 44px; align-items: center; padding-left: 9px; width: 133px; }
.playback svg { width: 14px; height: 14px; }
.track { position: relative; width: 362px; padding-top: 15px; }
.steps { display: grid; grid-template-columns: repeat(16, 1fr); justify-items: center; }
.rail { margin-top: 2px; }
.marker { position: absolute; right: -5px; top: 10px; }
.settings { margin: 0 4px 2px auto; }
.settings svg { width: 16px; height: 16px; }
```
